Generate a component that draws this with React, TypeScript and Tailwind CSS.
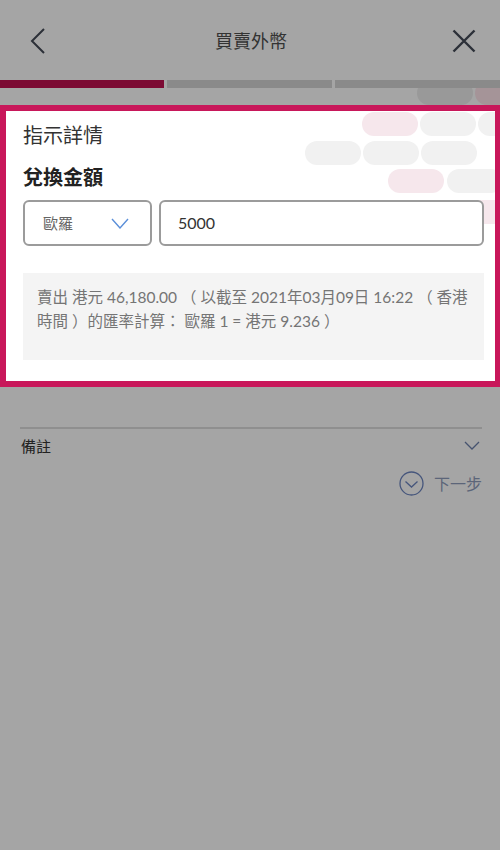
const font = "font-['Lato','Noto_Sans_CJK_TC',sans-serif]";

const pill = "h-6 w-14 shrink-0 rounded-[12px]";
const pink = "bg-[#f6e7ec]";
const gray = "bg-[#f1f1f1]";

function Pattern() {
  return (
    <div className="absolute inset-0 flex flex-col overflow-hidden pt-px">
      <div className="flex gap-[2px] pl-[356px]">
        <div className={`${pill} ${pink}`} />
        <div className={`${pill} ${gray}`} />
        <div className={`${pill} ${gray}`} />
      </div>
      <div className="mt-[5px] flex gap-[2px] pl-[299px]">
        <div className={`${pill} ${gray}`} />
        <div className={`${pill} ${gray}`} />
        <div className={`${pill} ${gray}`} />
      </div>
      <div className="mt-[4px] flex gap-[3px] pl-[382px]">
        <div className={`${pill} ${pink}`} />
        <div className={`${pill} ${gray}`} />
      </div>
      <div className="mt-[7px] flex pl-[445px]">
        <div className={`${pill} ${pink}`} />
      </div>
    </div>
  );
}

export default function App() {
  return (
    <div className={`${font} h-[850px] w-[500px] overflow-hidden bg-[#a5a5a5]`}>
      <header className="flex h-20 items-center justify-between pl-[29px] pr-[23px] pt-[2px]">
        <svg width="18" height="28" viewBox="0 0 18 28" fill="none" stroke="#2c3038" strokeWidth="2">
          <path d="M15 2 L3 14 L15 26" />
        </svg>
        <h1 className="pl-1 text-[18px] text-[#333333]">買賣外幣</h1>
        <svg width="26" height="26" viewBox="0 0 26 26" fill="none" stroke="#2c3038" strokeWidth="2.4">
          <path d="M2.5 2.5 L23.5 23.5 M23.5 2.5 L2.5 23.5" />
        </svg>
      </header>

      <div className="flex h-2 gap-[3px]">
        <div className="w-[164px] bg-[#7c0a33]" />
        <div className="w-[165px] bg-[#8a8a8a]" />
        <div className="flex-1 bg-[#8a8a8a]" />
      </div>

      {/* dimmed pattern between the bar and the highlight */}
      <div className="flex h-[17px] items-end gap-[2px] overflow-hidden pl-[417px]">
        <div className={`${pill} bg-[#999999]`} />
        <div className={`${pill} bg-[#a59498]`} />
      </div>

      <section className="relative h-[282px] border-y-[6px] border-l-[6px] border-r-[5px] border-[#c8175a] bg-white pl-[17px] pr-[11px]">
        <Pattern />

        <div className="relative">
          <h2 className="pt-[9px] text-[20px] leading-[30px] text-[#333333]">指示詳情</h2>
          <h3 className="mt-[12px] text-[20px] font-bold leading-[30px] text-[#222222]">兌換金額</h3>

          <div className="mt-2 flex gap-[7px]">
            <div className="flex h-[46px] w-[129px] items-center justify-between rounded-[6px] border-2 border-[#9b9b9b] bg-white pl-[18px] pr-[21px]">
              <span className="text-[15px] text-[#666666]">歐羅</span>
              <svg width="18" height="11" viewBox="0 0 18 11" fill="none" stroke="#5b8fd9" strokeWidth="1.4">
                <path d="M1 1 L9 10 L17 1" />
              </svg>
            </div>
            <div className="flex h-[46px] flex-1 items-center rounded-[6px] border-2 border-[#9b9b9b] bg-white pl-[17px]">
              <span className="text-[16px] text-[#333333]">5000</span>
            </div>
          </div>

          <div className="mt-[27px] h-[87px] bg-[#f4f4f4] px-[14px] pt-3 text-[15.5px] leading-[24px] text-[#757575]">
            賣出 港元 46,180.00 （ 以截至 2021年03月09日 16:22 （ 香港時間 ）的匯率計算： 歐羅 1 = 港元 9.236 ）
          </div>
        </div>
      </section>

      <div className="ml-5 mr-[18px] mt-[40px] border-t-2 border-[#8f8f8f] pt-[6px]">
        <div className="flex items-center justify-between pl-px pr-[2px]">
          <span className="text-[15px] leading-[22px] text-[#222222]">備註</span>
          <svg width="16" height="10" viewBox="0 0 16 10" fill="none" stroke="#46536f" strokeWidth="1.3">
            <path d="M1 1 L8 8 L15 1" />
          </svg>
        </div>
        <div className="mt-[14px] flex items-center justify-end gap-[10px]">
          <svg width="25" height="25" viewBox="0 0 25 25" fill="none" stroke="#46567c" strokeWidth="1.3">
            <circle cx="12.5" cy="12.5" r="11.5" />
            <path d="M6.5 10.5 L12.5 16 L18.5 10.5" />
          </svg>
          <span className="text-[16px] text-[#5c6579]">下一步</span>
        </div>
      </div>
    </div>
  );
}
